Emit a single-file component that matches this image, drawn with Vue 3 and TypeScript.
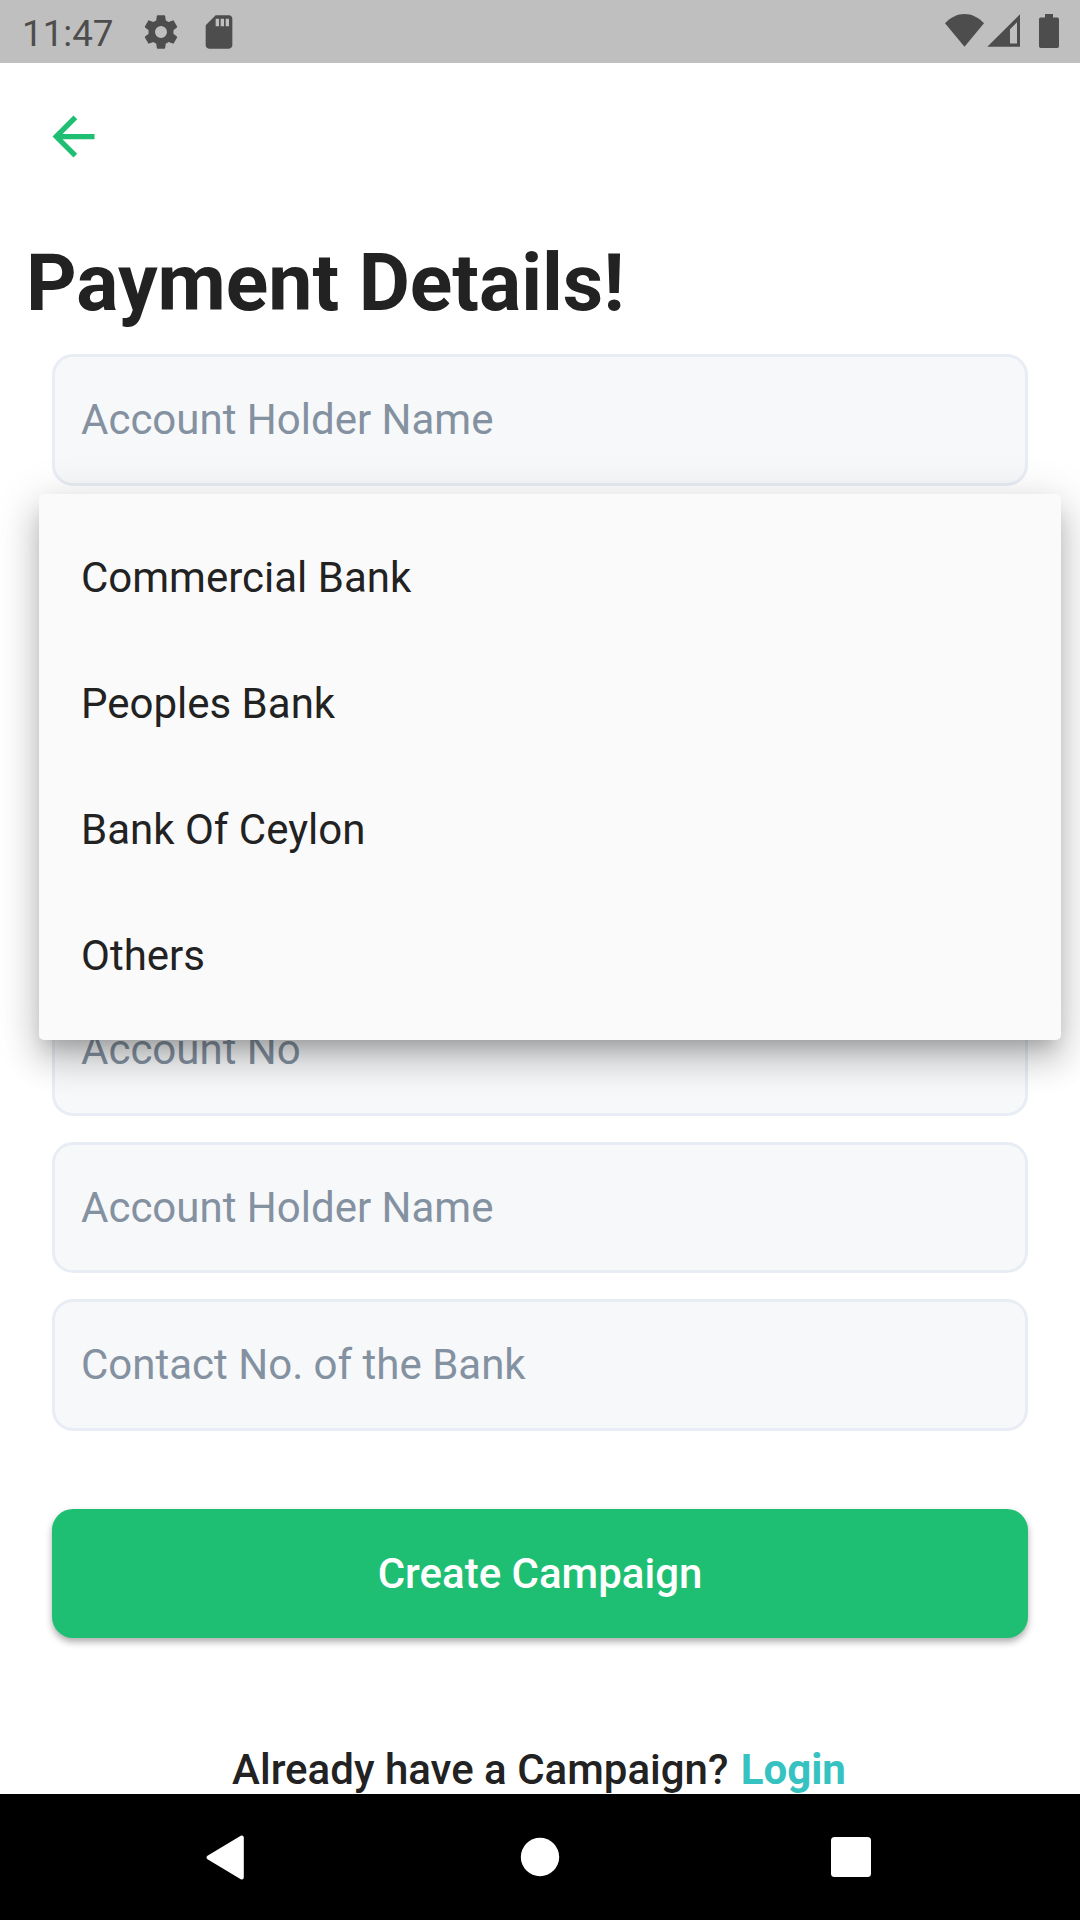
<script setup lang="ts">
const banks: string[] = ['Commercial Bank', 'Peoples Bank', 'Bank Of Ceylon', 'Others']
const lowerFields: string[] = ['Account No', 'Account Holder Name', 'Contact No. of the Bank']
</script>

<template>
  <div class="screen">
    <header class="status">
      <span class="time">11:47</span>
      <svg class="gear" viewBox="0 0 24 24"><path d="M19.43 12.98c.04-.32.07-.64.07-.98s-.03-.66-.07-.98l2.11-1.65c.19-.15.24-.42.12-.64l-2-3.46c-.12-.22-.39-.3-.61-.22l-2.49 1c-.52-.4-1.08-.73-1.69-.98l-.38-2.65C14.46 2.18 14.25 2 14 2h-4c-.25 0-.46.18-.49.42l-.38 2.65c-.61.25-1.17.59-1.69.98l-2.49-1c-.23-.09-.49 0-.61.22l-2 3.46c-.13.22-.07.49.12.64l2.11 1.65c-.04.32-.07.65-.07.98s.03.66.07.98l-2.11 1.65c-.19.15-.24.42-.12.64l2 3.46c.12.22.39.3.61.22l2.49-1c.52.4 1.08.73 1.69.98l.38 2.65c.03.24.24.42.49.42h4c.25 0 .46-.18.49-.42l.38-2.65c.61-.25 1.17-.59 1.69-.98l2.49 1c.23.09.49 0 .61-.22l2-3.46c.12-.22.07-.49-.12-.64l-2.11-1.65zM12 15.6a3.6 3.6 0 1 1 0-7.2 3.6 3.6 0 0 1 0 7.2z" /></svg>
      <svg class="sd" viewBox="0 0 24 24"><path d="M18 2h-8L4.02 8 4 20c0 1.1.9 2 2 2h12c1.1 0 2-.9 2-2V4c0-1.1-.9-2-2-2zm-6 6.5h-2V4h2v4.5zm3 0h-2V4h2v4.5zm3 0h-2V4h2v4.5z" /></svg>
      <svg class="system" viewBox="0 0 120 63">
        <path d="M24.5 46.7 5 23.3C10.5 17.3 17.5 14 24.5 14S38.5 17.3 44 23.3Z" />
        <path fill-rule="evenodd" d="M80 14.3V46.8H47.3ZM77 22.3 70 29.3V43.5H77Z" />
        <path d="M105 14h8v3.5h4.3q1.7 0 1.7 1.7v27q0 1.8-1.8 1.8h-16.4q-1.8 0-1.8-1.8v-27q0-1.7 1.7-1.7h4.3Z" />
      </svg>
    </header>

    <main class="content">
      <svg class="back" viewBox="0 0 24 24"><path d="M20 11H7.83l5.59-5.59L12 4l-8 8 8 8 1.41-1.41L7.83 13H20v-2z" /></svg>
      <h1>Payment Details!</h1>
      <div class="field"><span>Account Holder Name</span></div>
      <div class="select">
        <ul class="menu">
          <li v-for="bank in banks" :key="bank">{{ bank }}</li>
        </ul>
      </div>
      <div v-for="label in lowerFields" :key="label" class="field"><span>{{ label }}</span></div>
      <button class="create" type="button">Create Campaign</button>
      <p class="login">Already have a Campaign? <b>Login</b></p>
    </main>

    <nav class="nav">
      <svg viewBox="0 0 1080 126">
        <path d="M241.8 43.5V83.5L208.5 63.5Z" fill="#fff" stroke="#fff" stroke-width="4" stroke-linejoin="round" />
        <circle cx="540" cy="63" r="19.2" fill="#fff" />
        <rect x="831" y="43" width="40" height="40" rx="3.5" fill="#fff" />
      </svg>
    </nav>
  </div>
</template>

<style scoped>
.screen {
  width: 1080px;
  height: 1920px;
  overflow: hidden;
  display: flex;
  flex-direction: column;
  background: #fff;
  color: #222;
  font-family: Roboto, sans-serif;
  font-size: 42px;
}
.status {
  flex: none;
  height: 63px;
  display: flex;
  align-items: center;
  background: #bfbfbf;
  color: #4d4d4d;
  fill: #4d4d4d;
}
.time {
  width: 119px;
  margin-left: 22px;
  font-size: 36.75px;
  line-height: 63px;
  padding-top: 3px;
}
.gear,
.sd {
  width: 40px;
  height: 40px;
}
.sd {
  margin-left: 18px;
}
.system {
  width: 120px;
  height: 63px;
  margin-left: auto;
  margin-right: 20px;
}
.content {
  flex: none;
  height: 1731px;
  display: flex;
  flex-direction: column;
}
.back {
  flex: none;
  width: 63px;
  height: 63px;
  margin: 42px 0 0 42px;
  fill: #1ebf73;
}
h1 {
  flex: none;
  margin: 69px 0 0 26px;
  height: 117.375px;
  font-size: 78.75px;
  font-weight: 700;
  line-height: 92px;
  white-space: nowrap;
}
.field {
  flex: none;
  box-sizing: border-box;
  width: 976px;
  height: 131.25px;
  margin: 0 0 26.25px 52px;
  padding: 0 0 0.5px 26px;
  border: 3px solid #e8ecf4;
  border-radius: 21px;
  background: #f7f8f9;
  color: #8391a1;
  display: flex;
  align-items: center;
}
.select {
  flex: none;
  height: 472.5px;
  position: relative;
}
.menu {
  position: absolute;
  z-index: 1;
  left: 39px;
  top: -17.875px;
  width: 1022px;
  height: 546px;
  box-sizing: border-box;
  margin: 0;
  padding: 21px 42px;
  list-style: none;
  border-radius: 5px;
  background: #fafafa;
  box-shadow:
    0 13px 18px -8px rgba(0, 0, 0, 0.2),
    0 21px 33px 2.6px rgba(0, 0, 0, 0.14),
    0 8px 45px 5px rgba(0, 0, 0, 0.12);
}
.menu li {
  height: 126px;
  line-height: 126px;
}
.create {
  flex: none;
  width: 976px;
  height: 129px;
  margin: 52.125px 0 0 52px;
  padding: 0;
  border: 0;
  border-radius: 21px;
  background: #1ebf73;
  box-shadow: 0 4px 7px rgba(0, 0, 0, 0.32);
  color: #fff;
  font: 500 42px/129px Roboto, sans-serif;
}
.login {
  margin: 106.5px 2px 0 0;
  text-align: center;
  font-weight: 500;
  line-height: 49px;
  white-space: nowrap;
}
.login b {
  margin-left: 2px;
  font-weight: 700;
  color: #35c2c1;
}
.nav {
  flex: none;
  height: 126px;
  background: #000;
}
.nav svg {
  display: block;
  width: 1080px;
  height: 126px;
}
</style>

<style>
body {
  margin: 0;
}
</style>
